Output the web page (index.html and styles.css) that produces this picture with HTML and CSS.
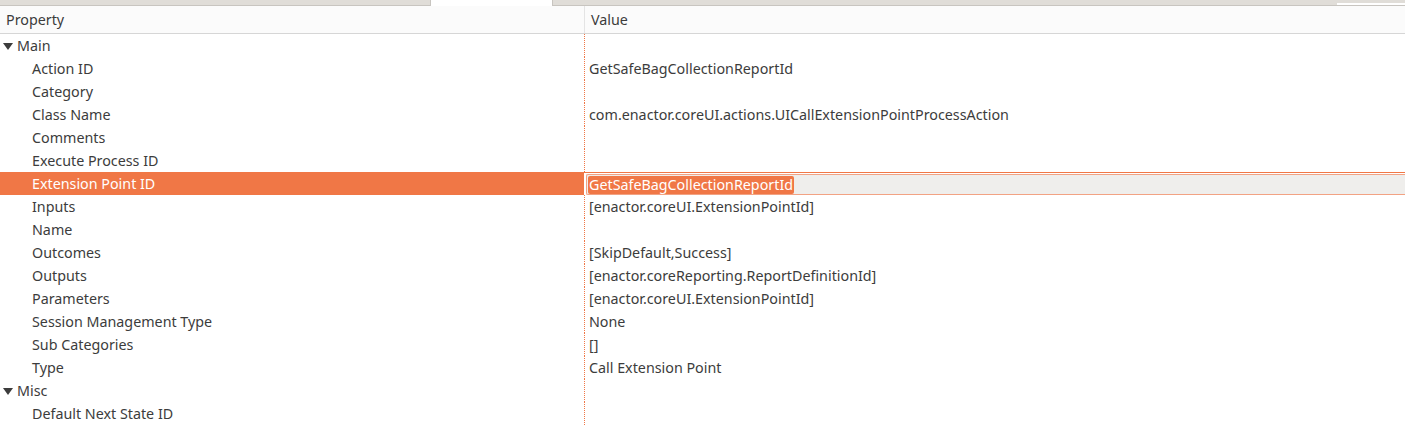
FILE: index.html
```html
<!DOCTYPE html>
<html>
<head>
<meta charset="utf-8">
<link rel="stylesheet" href="styles.css">
</head>
<body>
<div class="tabstrip">
  <div class="tab tab-a"></div>
  <div class="tab tab-active"></div>
  <div class="tab tab-b"></div>
  <div class="strip-bar"></div>
</div>
<div class="sheet">
  <div class="header">
    <div class="hcell hprop">Property</div>
    <div class="hcell hval">Value</div>
  </div>
  <div class="row"><div class="pcell cat"><span class="tri"></span>Main</div><div class="vcell"></div></div>
  <div class="row"><div class="pcell">Action ID</div><div class="vcell">GetSafeBagCollectionReportId</div></div>
  <div class="row"><div class="pcell">Category</div><div class="vcell"></div></div>
  <div class="row"><div class="pcell">Class Name</div><div class="vcell">com.enactor.coreUI.actions.UICallExtensionPointProcessAction</div></div>
  <div class="row"><div class="pcell">Comments</div><div class="vcell"></div></div>
  <div class="row"><div class="pcell">Execute Process ID</div><div class="vcell"></div></div>
  <div class="row selected"><div class="pcell">Extension Point ID</div><div class="vcell editing"><div class="editor"><span class="sel">GetSafeBagCollectionReportId</span></div></div></div>
  <div class="row"><div class="pcell">Inputs</div><div class="vcell">[enactor.coreUI.ExtensionPointId]</div></div>
  <div class="row"><div class="pcell">Name</div><div class="vcell"></div></div>
  <div class="row"><div class="pcell">Outcomes</div><div class="vcell">[SkipDefault,Success]</div></div>
  <div class="row"><div class="pcell">Outputs</div><div class="vcell">[enactor.coreReporting.ReportDefinitionId]</div></div>
  <div class="row"><div class="pcell">Parameters</div><div class="vcell">[enactor.coreUI.ExtensionPointId]</div></div>
  <div class="row"><div class="pcell">Session Management Type</div><div class="vcell">None</div></div>
  <div class="row"><div class="pcell">Sub Categories</div><div class="vcell">[]</div></div>
  <div class="row"><div class="pcell">Type</div><div class="vcell">Call Extension Point</div></div>
  <div class="row"><div class="pcell cat"><span class="tri"></span>Misc</div><div class="vcell"></div></div>
  <div class="row"><div class="pcell">Default Next State ID</div><div class="vcell"></div></div>
</div>
</body>
</html>
```
FILE: styles.css
```css
html, body {
  margin: 0;
  padding: 0;
  background: #ffffff;
  overflow: hidden;
}
body {
  width: 1405px;
  height: 425px;
  font-family: "Noto Sans", "Open Sans", sans-serif;
  font-size: 14.3px;
  color: #3c3c3c;
}
.tabstrip {
  height: 5px;
  background: #e0ddd8;
  border-bottom: 1px solid #c8c5c0;
  display: flex;
  position: relative;
}
.tab {
  height: 5px;
}
.tab-a {
  width: 430px;
}
.tab-active {
  width: 121px;
  height: 6px;
  background: #ffffff;
  border-left: 1px solid #c8c5c0;
  border-right: 1px solid #c8c5c0;
  margin-bottom: -1px;
}
.strip-bar {
  position: absolute;
  right: 0;
  top: 3px;
  width: 68px;
  height: 2px;
  background: #ffffff;
}
.sheet {
  display: flex;
  flex-direction: column;
}
.header {
  display: flex;
  height: 27px;
  background: #fbfbfb;
  border-bottom: 1px solid #d6d6d6;
}
.hcell {
  display: flex;
  align-items: center;
  line-height: 27px;
}
.hprop {
  width: 578px;
  padding-left: 6px;
  border-right: 1px solid #e4e4e4;
}
.hval {
  padding-left: 6px;
}
.row {
  display: flex;
  height: 23px;
  line-height: 23px;
}
.pcell {
  width: 552px;
  padding-left: 32px;
  white-space: nowrap;
  display: flex;
  align-items: center;
}
.pcell.cat {
  padding-left: 3px;
  width: 581px;
}
.tri {
  display: inline-block;
  width: 0;
  height: 0;
  border-left: 5px solid transparent;
  border-right: 5px solid transparent;
  border-top: 7px solid #3c3c3c;
  margin-right: 4px;
  margin-top: 1px;
}
.vcell {
  flex: 1;
  border-left: 1px dotted #f07746;
  padding-left: 4px;
  white-space: nowrap;
}
.selected .pcell {
  background: #f07746;
  color: #ffffff;
}
.selected .vcell.editing {
  border-left: none;
  padding-left: 2px;
  display: flex;
  flex-direction: column;
  border-top: 1px solid #f07746;
  padding-top: 1px;
  height: 21px;
}
.editor {
  flex: 1;
  background: #efeeec;
  border: 1px solid #f2a283;
  border-right: none;
  border-radius: 2px 0 0 2px;
  display: flex;
  align-items: center;
  padding-left: 1px;
  line-height: 18px;
}
.sel {
  background: #f07746;
  color: #ffffff;
  border-radius: 2px;
  padding: 0 1px;
}
```
